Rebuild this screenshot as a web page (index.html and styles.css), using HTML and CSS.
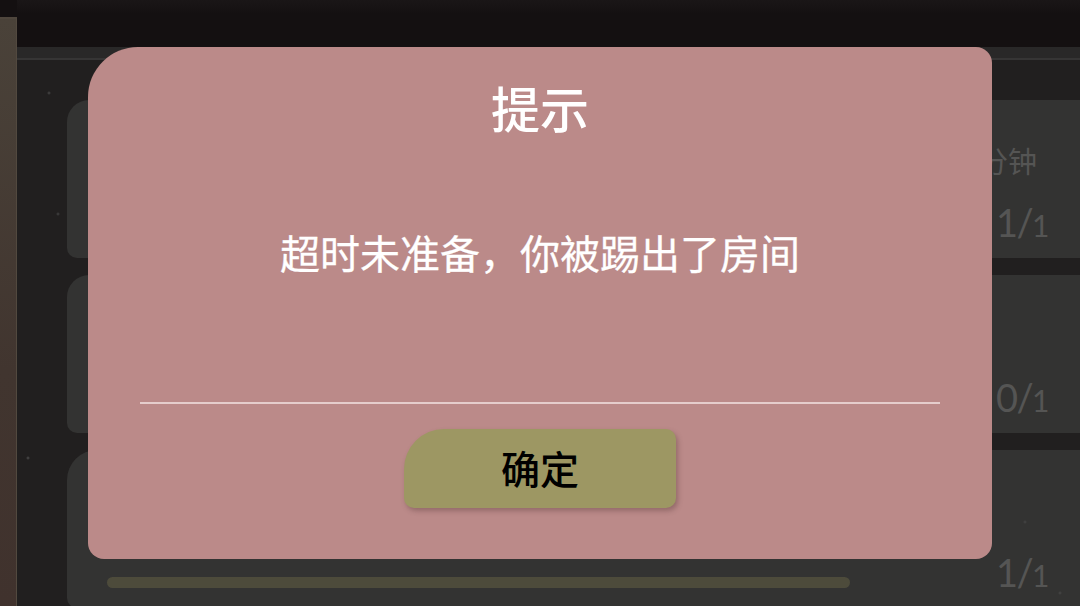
FILE: index.html
```html
<!DOCTYPE html>
<html lang="zh">
<head>
<meta charset="utf-8">
<title>提示</title>
<link rel="stylesheet" href="styles.css">
</head>
<body>
<div class="page">
  <aside class="rail"></aside>
  <main class="main">
    <div class="topband"></div>
    <div class="strip"></div>
    <div class="list">
      <section class="card">
        <div class="card-main"></div>
        <div class="card-side">
          <span class="label">分钟</span>
          <span class="count">1/<small>1</small></span>
        </div>
      </section>
      <section class="card">
        <div class="card-main"></div>
        <div class="card-side">
          <span class="count">0/<small>1</small></span>
        </div>
      </section>
      <section class="card card-large">
        <div class="card-main"><div class="progress"></div></div>
        <div class="card-side">
          <span class="count">1/<small>1</small></span>
        </div>
      </section>
    </div>
    <div class="specks"></div>
  </main>
</div>
<div class="modal" role="dialog">
  <h1 class="modal-title">提示</h1>
  <p class="modal-text">超时未准备，你被踢出了房间</p>
  <div class="modal-rule"></div>
  <button class="modal-btn" type="button">确定</button>
</div>
</body>
</html>
```
FILE: styles.css
```css
* { box-sizing: border-box; }
html, body {
  margin: 0;
  width: 1080px;
  height: 606px;
  overflow: hidden;
  background: #141011;
  font-family: "Noto Sans CJK SC", "Noto Sans", sans-serif;
}
.page {
  display: flex;
  width: 1080px;
  height: 606px;
}
.rail {
  width: 17px;
  margin-top: 17px;
  flex: none;
  background: linear-gradient(180deg, #4a4239 0%, #41352f 60%, #40322d 100%);
  border-right: 1px solid #52493f;
  border-top: 2px solid #4f463d;
}
.main {
  position: relative;
  flex: 1;
  display: flex;
  flex-direction: column;
  min-width: 0;
  background: #211f1f;
}
.topband {
  height: 47px;
  flex: none;
  background: linear-gradient(180deg, #1a1617 0%, #141011 30%, #141011 100%);
}
.strip {
  height: 13px;
  flex: none;
  background: #292828;
  border-bottom: 2px solid #363535;
}
.list {
  display: flex;
  flex-direction: column;
  gap: 17px;
  padding: 40px 0 0 50px;
}
.card {
  display: flex;
  flex: none;
  height: 158px;
  padding: 0 32px 0 40px;
  background: #333332;
  border-radius: 22px 0 0 10px;
}
.card-large {
  border-top-left-radius: 30px;
}
.card-main {
  flex: 1;
  display: flex;
  align-items: flex-end;
  padding-bottom: 20px;
}
.progress {
  width: 743px;
  height: 11px;
  border-radius: 6px;
  background: #4d4b3b;
}
.card-side {
  display: flex;
  flex-direction: column;
  align-items: flex-end;
  justify-content: flex-end;
  gap: 23px;
  padding-bottom: 13px;
  color: #555554;
}
.label {
  font-size: 29px;
  line-height: 40px;
  margin-right: 11px;
  margin-bottom: -1px;
}
.count {
  font-family: "Lato", sans-serif;
  font-size: 38px;
  line-height: 40px;
  font-weight: 400;
  letter-spacing: -1.5px;
}
.count small {
  font-size: 30px;
}
.specks {
  position: absolute;
  inset: 0;
  pointer-events: none;
  background-image:
    radial-gradient(circle, #4a4a4a 0, transparent 2px),
    radial-gradient(circle, #454545 0, transparent 2px),
    radial-gradient(circle, #505050 0, transparent 2px),
    radial-gradient(circle, #464646 0, transparent 2px),
    radial-gradient(circle, #484848 0, transparent 2px);
  background-repeat: no-repeat;
  background-size: 6px 6px;
  background-position: 29px 90px, 38px 211px, 8px 455px, 1005px 519px, 1040px 590px;
}
.modal {
  position: absolute;
  left: 88px;
  top: 47px;
  width: 904px;
  height: 512px;
  display: flex;
  flex-direction: column;
  align-items: center;
  background: #bb8a89;
  border-radius: 50px 16px 16px 16px;
  color: #fff;
}
.modal-title {
  margin: 25px 0 0;
  font-size: 49px;
  line-height: 70px;
  font-weight: 500;
}
.modal-text {
  margin: 81px 0 0;
  font-size: 40px;
  line-height: 58px;
  font-weight: 400;
  -webkit-text-stroke: 0.3px #fff;
}
.modal-rule {
  width: 800px;
  height: 2px;
  margin-top: 121px;
  background: #e5cdcc;
}
.modal-btn {
  width: 272px;
  height: 79px;
  margin-top: 25px;
  border: 0;
  padding: 0 0 3px;
  border-radius: 40px 10px 10px 10px;
  background: #9d9763;
  box-shadow: 2px 3px 5px rgba(90, 60, 60, 0.4);
  color: #000;
  font-family: inherit;
  font-size: 39px;
  font-weight: 500;
}
```
